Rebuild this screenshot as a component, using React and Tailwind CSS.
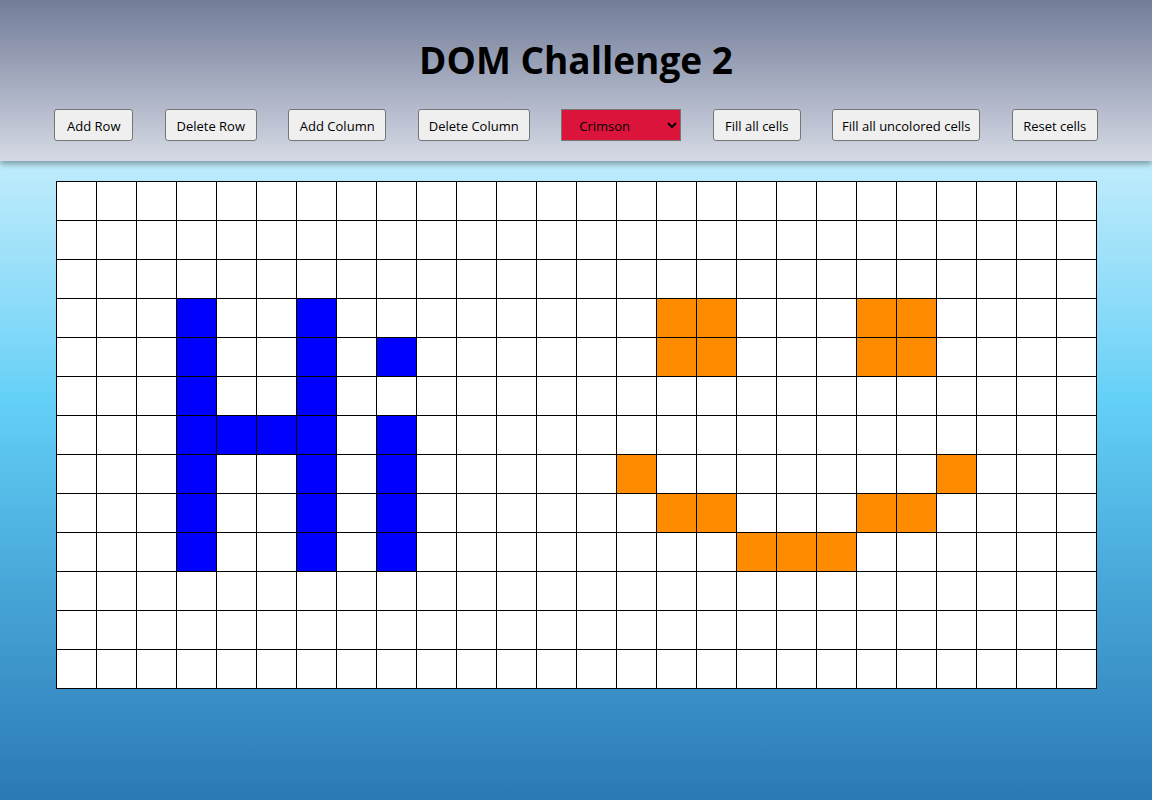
import { useState } from "react";

const ROWS = 13;
const COLS = 26;

// painted cells: "row-col" -> colour
const initialCells = () => {
    const cells = {};
    const paint = (list, color) => list.forEach(([r, c]) => (cells[`${r}-${c}`] = color));
    const blue = [];
    for (let r = 3; r <= 9; r++) {
        blue.push([r, 3], [r, 6]);
    }
    blue.push([6, 4], [6, 5], [4, 8], [6, 8], [7, 8], [8, 8], [9, 8]);
    paint(blue, "#0000ff");
    paint(
        [
            [3, 15], [3, 16], [4, 15], [4, 16],
            [3, 20], [3, 21], [4, 20], [4, 21],
            [7, 14], [7, 22],
            [8, 15], [8, 16], [8, 20], [8, 21],
            [9, 17], [9, 18], [9, 19],
        ],
        "#ff8c00"
    );
    return cells;
};

const buttonClass =
    "h-[32px] shrink-0 rounded-[3px] border border-[#767676] bg-[#efefef] pt-[3px] text-[13px] text-black hover:bg-[#e5e5e5]";

const App = () => {
    const [cells] = useState(initialCells);
    const [color, setColor] = useState("Crimson");

    return (
        <div
            className="min-h-[800px] bg-gradient-to-b from-[#bdebfb] from-[21%] via-[#63d0f7] via-[50%] to-[#2b79b4]"
            style={{ fontFamily: '"Open Sans", "Noto Sans", sans-serif' }}
        >
            {/* Header */}
            <div className="relative h-[161px] bg-gradient-to-b from-[#737d99] to-[#d6dae5] shadow-[0_3px_6px_rgba(0,0,0,0.35)]">
                <h1 className="pt-[33px] text-center text-[37px] font-bold leading-[54px] text-black">
                    DOM Challenge 2
                </h1>
                <div className="mt-[22px] flex justify-center gap-[31.5px]">
                    <button className={`${buttonClass} w-[79px]`}>Add Row</button>
                    <button className={`${buttonClass} w-[92px]`}>Delete Row</button>
                    <button className={`${buttonClass} w-[98px]`}>Add Column</button>
                    <button className={`${buttonClass} w-[112px]`}>Delete Column</button>
                    <select
                        value={color}
                        onChange={(e) => setColor(e.target.value)}
                        className="h-[32px] w-[120px] shrink-0 border border-[#767676] bg-[#dc143c] pl-[13px] pt-[2px] text-[13px] text-black"
                    >
                        <option>Crimson</option>
                        <option>Blue</option>
                        <option>DarkOrange</option>
                        <option>Green</option>
                    </select>
                    <button className={`${buttonClass} w-[88px]`}>Fill all cells</button>
                    <button className={`${buttonClass} w-[148px]`}>Fill all uncolored cells</button>
                    <button className={`${buttonClass} w-[86px]`}>Reset cells</button>
                </div>
            </div>

            {/* Grid */}
            <div className="mt-[20px] flex justify-center">
                <div className="grid grid-cols-[repeat(26,39px)] grid-rows-[repeat(13,38px)] gap-px bg-black p-px">
                    {Array.from({ length: ROWS * COLS }, (_, i) => {
                        const r = Math.floor(i / COLS);
                        const c = i % COLS;
                        return (
                            <div
                                key={i}
                                className="bg-white"
                                style={cells[`${r}-${c}`] ? { backgroundColor: cells[`${r}-${c}`] } : undefined}
                            />
                        );
                    })}
                </div>
            </div>
        </div>
    );
};

export default App;
